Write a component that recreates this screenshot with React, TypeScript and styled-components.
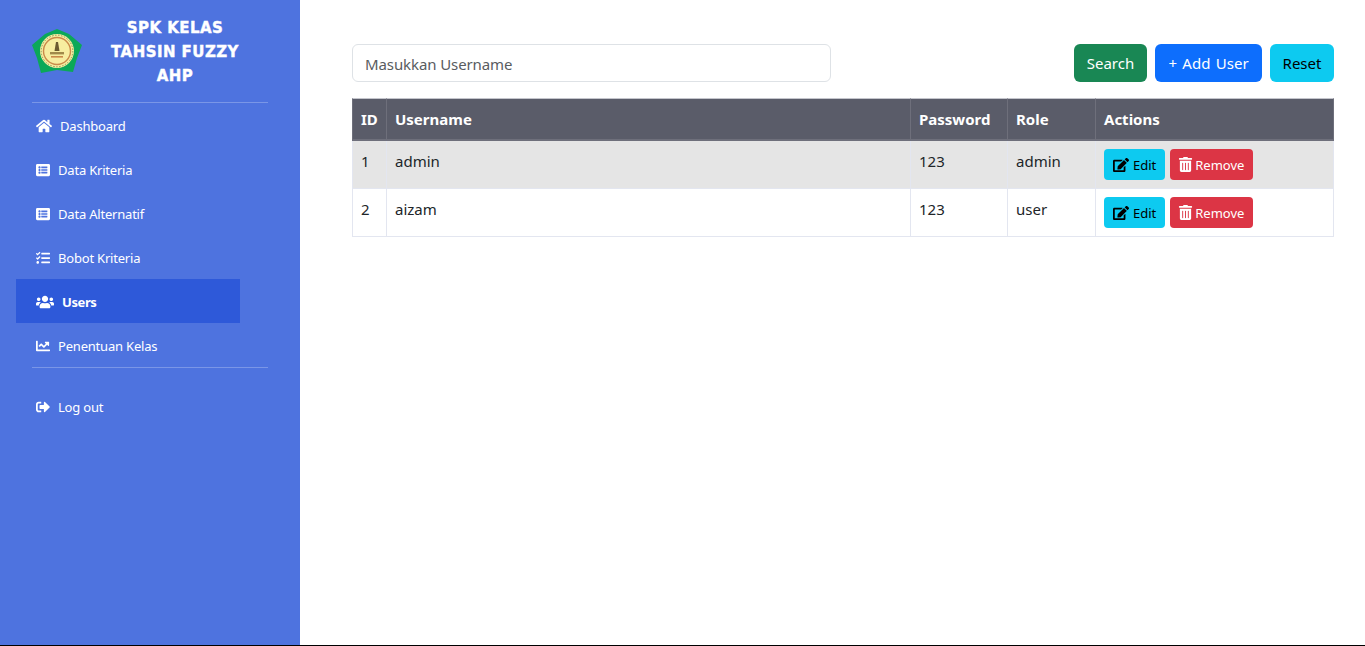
import React from 'react'
import styled, { createGlobalStyle } from 'styled-components'
import { FaChartLine, FaEdit, FaHome, FaListAlt, FaSignOutAlt, FaTasks, FaTrashAlt, FaUsers } from 'react-icons/fa'

const GlobalStyle = createGlobalStyle`
html, body {
    margin: 0;
    padding: 0;
    height: 646px;
    background: #000;
    overflow: hidden;
}
* {
    box-sizing: border-box;
}
body {
    font-family: "Noto Sans", "Open Sans", sans-serif;
    color: #212529;
}
`

const users = [
    { id: 1, username: 'admin', password: '123', role: 'admin' },
    { id: 2, username: 'aizam', password: '123', role: 'user' },
]

const Logo: React.FC = () => (
    <LogoSvg viewBox="0 0 50 44" aria-hidden="true">
        <path d="M25 0 L37 5 L50 16 L45 29 L41 43 L25 41 L9 44 L5 29 L0 16 L13 5 Z" fill="#0ba858" />
        <circle cx="25" cy="22" r="17" fill="#f7eda0" />
        <circle cx="25" cy="22" r="13.5" fill="none" stroke="#c98a4a" strokeWidth="1.4" />
        <circle cx="25" cy="22" r="15.8" fill="none" stroke="#7d8a50" strokeWidth="0.9" strokeDasharray="1.5 1.5" />
        <path d="M24 13 L26 13 L27.5 22 L22.5 22 Z" fill="#6b5a30" />
        <rect x="18" y="23" width="14" height="2.4" fill="#a08a4a" />
        <rect x="19" y="27" width="12" height="1.6" fill="#c98a4a" />
    </LogoSvg>
)

const App: React.FC = () => {
    return (
        <Page>
            <GlobalStyle />
            <Sidebar>
                <Brand>
                    <Logo />
                    <BrandTitle>SPK KELAS TAHSIN FUZZY AHP</BrandTitle>
                </Brand>
                <Divider />
                <NavLink><FaHome size={16} /> Dashboard</NavLink>
                <NavLink><FaListAlt size={14} /> Data Kriteria</NavLink>
                <NavLink><FaListAlt size={14} /> Data Alternatif</NavLink>
                <NavLink><FaTasks size={14} /> Bobot Kriteria</NavLink>
                <NavLink $active><FaUsers size={18} /> Users</NavLink>
                <NavLink><FaChartLine size={14} /> Penentuan Kelas</NavLink>
                <Divider />
                <LogoutLink><FaSignOutAlt size={14} /> Log out</LogoutLink>
            </Sidebar>
            <Main>
                <Toolbar>
                    <SearchInput placeholder="Masukkan Username" />
                    <Controls>
                        <Button $bg="#198754" $fg="#fff" $width={73}>Search</Button>
                        <Button $bg="#0d6efd" $fg="#fff" $width={107} $wordGap={1.5}>+ Add User</Button>
                        <Button $bg="#0dcaf0" $fg="#000" $width={64}>Reset</Button>
                    </Controls>
                </Toolbar>
                <Table>
                    <colgroup>
                        <col style={{ width: 35 }} />
                        <col style={{ width: 524 }} />
                        <col style={{ width: 97 }} />
                        <col style={{ width: 88 }} />
                        <col style={{ width: 238 }} />
                    </colgroup>
                    <thead>
                        <tr>
                            <HeadCell>ID</HeadCell>
                            <HeadCell>Username</HeadCell>
                            <HeadCell>Password</HeadCell>
                            <HeadCell>Role</HeadCell>
                            <HeadCell>Actions</HeadCell>
                        </tr>
                    </thead>
                    <tbody>
                        {users.map((user, index) => (
                            <Row key={user.id} $striped={index % 2 === 0}>
                                <Cell>{user.id}</Cell>
                                <Cell>{user.username}</Cell>
                                <Cell>{user.password}</Cell>
                                <Cell>{user.role}</Cell>
                                <Cell>
                                    <Actions>
                                        <SmallButton $bg="#0dcaf0" $fg="#000" $left={9} $gap={4}><FaEdit size={16} /> Edit</SmallButton>
                                        <SmallButton $bg="#dc3545" $fg="#fff" $left={8} $gap={2}><FaTrashAlt size={15} /> Remove</SmallButton>
                                    </Actions>
                                </Cell>
                            </Row>
                        ))}
                    </tbody>
                </Table>
            </Main>
        </Page>
    )
}

const Page = styled.div`
display: flex;
width: 1365px;
height: 645px;
background: #fff;
`

const Sidebar = styled.aside`
flex: 0 0 300px;
background: #4e73df;
padding: 0 32px 0 16px;
`

const Brand = styled.div`
display: flex;
align-items: center;
height: 102px;
padding-left: 16px;
`

const LogoSvg = styled.svg`
flex: 0 0 50px;
width: 50px;
height: 44px;
`

const BrandTitle = styled.div`
width: 160px;
margin-left: 13px;
padding-top: 2px;
font-family: "DejaVu Sans", sans-serif;
font-size: 15px;
font-weight: 700;
line-height: 24px;
letter-spacing: 0.45px;
-webkit-text-stroke: 0.4px #fff;
color: #fff;
text-align: center;
`

const Divider = styled.hr`
margin: 0 0 0 16px;
border: 0;
border-top: 1px solid rgba(255, 255, 255, 0.25);
`

const NavLink = styled.a<{ $active?: boolean }>`
display: flex;
align-items: center;
gap: 8px;
width: 224px;
height: 44px;
padding: 2px 0 0 20px;
font-size: 13px;
font-weight: ${props => (props.$active ? 700 : 400)};
letter-spacing: ${props => (props.$active ? '-0.4px' : '-0.2px')};
color: #fff;
background: ${props => (props.$active ? '#2e59d9' : 'transparent')};
`

const LogoutLink = styled(NavLink)`
margin-top: 16px;
`

const Main = styled.main`
flex: 1;
padding: 44px 31px 0 52px;
`

const Toolbar = styled.div`
display: flex;
justify-content: space-between;
margin-bottom: 16px;
`

const SearchInput = styled.input`
width: 479px;
height: 38px;
padding: 2px 12px 0;
border: 1px solid #dee2e6;
border-radius: 6px;
font: 400 15px "Noto Sans", sans-serif;
letter-spacing: -0.1px;
color: #212529;

&::placeholder {
    color: #595c5f;
    opacity: 1;
}
`

const Controls = styled.div`
display: flex;
gap: 8px;
`

const Button = styled.button<{ $bg: string; $fg: string; $width: number; $wordGap?: number }>`
width: ${props => props.$width}px;
height: 38px;
padding: 0;
border: 0;
border-radius: 6px;
font: 400 15px "Noto Sans", sans-serif;
word-spacing: ${props => props.$wordGap ?? 0}px;
background: ${props => props.$bg};
color: ${props => props.$fg};
`

const Table = styled.table`
width: 982px;
table-layout: fixed;
border-collapse: separate;
border-spacing: 0;
font-size: 15px;
`

const HeadCell = styled.th`
height: 43px;
padding: 0 8px;
border-top: 1px solid #c4c5cc;
border-right: 1px solid #6e6f7b;
border-bottom: 2px solid #6e6f7b;
background: #5a5c69;
color: #fff;
font-weight: 700;
text-align: left;

&:first-child {
    border-left: 1px solid #6e6f7b;
}
`

const Row = styled.tr<{ $striped?: boolean }>`
background: ${props => (props.$striped ? '#e5e5e5' : '#fff')};
`

const Cell = styled.td`
height: 48px;
padding: 10px 8px 0;
border-right: 1px solid #e3e6f0;
border-bottom: 1px solid #e3e6f0;
vertical-align: top;

&:first-child {
    border-left: 1px solid #e3e6f0;
}
`

const Actions = styled.div`
display: flex;
gap: 5px;
margin-top: -2px;
`

const SmallButton = styled.button<{ $bg: string; $fg: string; $left: number; $gap: number }>`
display: flex;
align-items: center;
gap: ${props => props.$gap}px;
height: 31px;
padding: 0 9px 0 ${props => props.$left}px;
border: 0;
border-radius: 4px;
font: 400 13px "Noto Sans", sans-serif;
background: ${props => props.$bg};
color: ${props => props.$fg};
`

export default App
